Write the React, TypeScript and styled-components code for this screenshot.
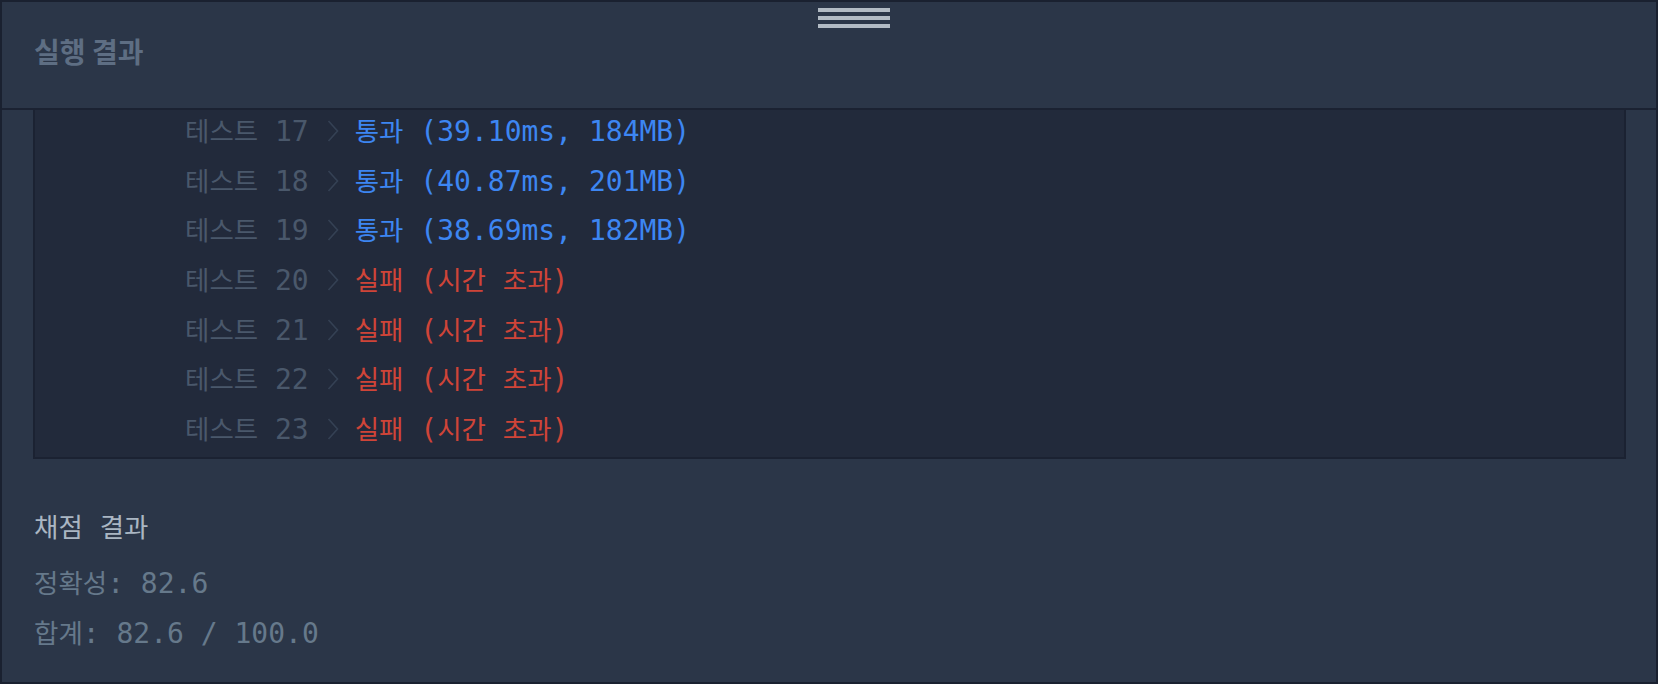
import React, { useLayoutEffect, useRef } from 'react';
import styled, { createGlobalStyle } from 'styled-components';

type Status = 'pass' | 'fail';

interface TestCase {
    no: number;
    status: Status;
    time?: string;
    memory?: string;
}

const passData: [string, string][] = [
    ['0.02ms', '4.2MB'], ['0.03ms', '4.11MB'], ['0.05ms', '4.2MB'], ['0.04ms', '4.18MB'],
    ['1.21ms', '4.5MB'], ['3.87ms', '6.02MB'], ['12.40ms', '23.4MB'], ['15.93ms', '41.2MB'],
    ['0.02ms', '4.14MB'], ['0.03ms', '4.12MB'], ['22.18ms', '78.3MB'], ['25.61ms', '96.1MB'],
    ['31.02ms', '121MB'], ['33.47ms', '140MB'], ['35.80ms', '158MB'], ['37.26ms', '171MB'],
    ['39.10ms', '184MB'], ['40.87ms', '201MB'], ['38.69ms', '182MB'],
];

const tests: TestCase[] = [
    ...passData.map(([time, memory], i) => ({ no: i + 1, status: 'pass' as Status, time, memory })),
    { no: 20, status: 'fail' },
    { no: 21, status: 'fail' },
    { no: 22, status: 'fail' },
    { no: 23, status: 'fail' },
];

const GlobalStyle = createGlobalStyle`
    *, *::before, *::after {
        box-sizing: border-box;
    }
    html, body, #root {
        margin: 0;
        height: 100%;
    }
    body {
        background-color: #2b3648;
        font-family: 'DejaVu Sans Mono', 'Noto Sans CJK KR', monospace;
    }
`;

const Chevron = () => (
    <StlChevron width="12" height="22" viewBox="0 0 12 22">
        <polyline points="1.5,1 10.5,11 1.5,21" fill="none" stroke="#354154" strokeWidth="1.6" />
    </StlChevron>
);

const Result = ({ test }: { test: TestCase }) => {
    if (test.status === 'pass') {
        return (
            <StlResult $status="pass">
                <Ko>통과</Ko> ({test.time}, {test.memory})
            </StlResult>
        );
    }
    return (
        <StlResult $status="fail">
            <Ko>실패</Ko> (<Ko>시간</Ko> <Ko>초과</Ko>)
        </StlResult>
    );
};

export default function App() {
    const bodyRef = useRef<HTMLDivElement>(null);

    // the result panel is scrolled down to its end
    useLayoutEffect(() => {
        const el = bodyRef.current;
        if (el) el.scrollTop = el.scrollHeight;
    }, []);

    return (
        <>
            <GlobalStyle />
            <StlFrame>
                <StlHeader>
                    <StlHandle>
                        <span />
                        <span />
                        <span />
                    </StlHandle>
                    <StlTitle>실행 결과</StlTitle>
                </StlHeader>
                <StlBody ref={bodyRef}>
                    <StlContent>
                        <StlResultBox>
                            {tests.map((t) => (
                                <StlRow key={t.no}>
                                    <Ko>테스트</Ko> {t.no}
                                    <Chevron />
                                    <Result test={t} />
                                </StlRow>
                            ))}
                        </StlResultBox>
                        <StlScore>
                            <StlScoreTitle>
                                <Ko>채점</Ko> <Ko>결과</Ko>
                            </StlScoreTitle>
                            <StlScoreLine>
                                <Ko>정확성</Ko>: 82.6
                            </StlScoreLine>
                            <StlScoreLine>
                                <Ko>합계</Ko>: 82.6 / 100.0
                            </StlScoreLine>
                        </StlScore>
                    </StlContent>
                </StlBody>
            </StlFrame>
        </>
    );
}

const StlFrame = styled.div`
    height: 100vh;
    display: flex;
    flex-direction: column;
    border: 2px solid #1a2130;
    background-color: #2b3648;
    overflow: hidden;
`;

const StlHeader = styled.header`
    flex: none;
    height: 108px;
    display: flex;
    flex-direction: column;
    align-items: flex-start;
    padding: 6px 0 0 32px;
    border-bottom: 2px solid #1b2232;
`;

const StlHandle = styled.div`
    display: flex;
    flex-direction: column;
    gap: 4.5px;
    width: 72px;
    margin-left: 784px;

    span {
        display: block;
        height: 3.5px;
        background-color: #b2bbc4;
    }
`;

const StlTitle = styled.h2`
    margin: 9px 0 0;
    font-family: 'Noto Sans CJK KR', sans-serif;
    font-size: 28px;
    font-weight: 700;
    line-height: 1;
    color: #5e6e83;
`;

const StlBody = styled.div`
    flex: 1;
    min-height: 0;
    overflow: hidden;
`;

const StlContent = styled.div`
    padding: 0 30px 23px 31px;
`;

const StlResultBox = styled.div`
    background-color: #222a3b;
    border: 2px solid #1b2232;
    padding: 8px 0 2.6px;
`;

const StlRow = styled.div`
    height: 49.7px;
    line-height: 49.7px;
    padding-left: 150px;
    white-space: pre;
    font-size: 28px;
    color: #4a586b;
`;

const Ko = styled.span`
    font-family: 'Noto Sans CJK KR', sans-serif;
    font-size: 26.5px;
    line-height: 1;
`;

const StlChevron = styled.svg`
    display: inline-block;
    vertical-align: -1px;
    margin: 0 16px 0 18px;
`;

const StlResult = styled.span<{ $status: Status }>`
    color: ${({ $status }) => ($status === 'pass' ? '#3d86f2' : '#cf4438')};
`;

const StlScore = styled.div`
    margin-top: 43.5px;
    padding-left: 1px;
    font-size: 28px;
    white-space: pre;
`;

const StlScoreTitle = styled.div`
    height: 49.7px;
    line-height: 49.7px;
    margin-bottom: 6.6px;
    color: #aab6c3;
`;

const StlScoreLine = styled.div`
    height: 49.7px;
    line-height: 49.7px;
    color: #66798b;
`;
